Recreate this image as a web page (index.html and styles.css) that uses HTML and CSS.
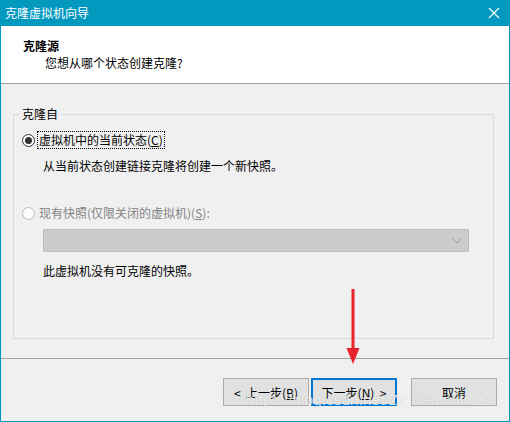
FILE: index.html
```html
<!DOCTYPE html>
<html lang="zh-CN">
<head>
    <meta charset="UTF-8">
    <title>克隆虚拟机向导</title>
    <link rel="stylesheet" href="styles.css">
</head>
<body>
    <div class="window">
        <div class="titlebar">
            <span class="title">克隆虚拟机向导</span>
            <svg class="close" width="12" height="12" viewBox="0 0 12 12">
                <path d="M1 1 L11 11 M11 1 L1 11" stroke="#fff" stroke-width="1.2" fill="none"/>
            </svg>
        </div>

        <div class="header">
            <div class="header-title">克隆源</div>
            <div class="header-sub">您想从哪个状态创建克隆?</div>
        </div>

        <div class="content">
            <fieldset class="group">
                <legend>克隆自</legend>

                <div class="option">
                    <span class="radio checked"></span>
                    <span class="label focused">虚拟机中的当前状态(<u>C</u>)</span>
                </div>
                <div class="desc first">从当前状态创建链接克隆将创建一个新快照。</div>

                <div class="option disabled">
                    <span class="radio"></span>
                    <span class="label">现有快照(仅限关闭的虚拟机)(<u>S</u>):</span>
                </div>
                <div class="combo">
                    <svg width="10" height="6" viewBox="0 0 10 6">
                        <path d="M0.5 0.5 L5 5 L9.5 0.5" stroke="#9a9a9a" stroke-width="1" fill="none"/>
                    </svg>
                </div>
                <div class="desc last">此虚拟机没有可克隆的快照。</div>
            </fieldset>
        </div>

        <div class="footer">
            <button class="btn">&lt;&nbsp; 上一步(<u>B</u>)</button>
            <button class="btn primary">下一步(<u>N</u>)&nbsp; &gt;</button>
            <button class="btn cancel">取消</button>
        </div>

        <!-- annotation drawn on top of the screenshot -->
        <svg class="arrow" width="16" height="80" viewBox="0 0 16 80">
            <line x1="8" y1="1" x2="8" y2="64" stroke="#e8232b" stroke-width="3"/>
            <path d="M1.5 60 L14.5 60 L8 76 Z" fill="#e8232b"/>
        </svg>
        <div class="watermark">https://blog.csdn.net/Zz_xiaonuli_zZ</div>
    </div>
</body>
</html>
```

FILE: styles.css
```css
body {
    margin: 0;
    font-family: "Noto Sans CJK SC", "Noto Sans", sans-serif;
    font-size: 12px;
    color: #000;
    background: #fff;
}
.window {
    position: relative;
    width: 510px;
    height: 422px;
    box-sizing: border-box;
    border: 1px solid #0399bf;
    border-top: none;
    background: #f0f0f0;
    overflow: hidden;
}
.titlebar {
    display: flex;
    align-items: center;
    justify-content: space-between;
    height: 26px;
    margin: 0 -1px;
    padding: 0 10px 0 5px;
    background: #0399bf;
    color: #fff;
    line-height: 16px;
}
.close {
    display: block;
}
.header {
    height: 58px;
    box-sizing: border-box;
    padding-top: 11px;
    background: #fff;
    border-bottom: 1px solid #a0a0a0;
    line-height: 17px;
}
.header-title {
    padding-left: 22px;
    font-weight: bold;
}
.header-sub {
    padding-left: 44px;
}
.content {
    height: 275px;
    box-sizing: border-box;
    padding-top: 22px;
    border-bottom: 1px solid #a0a0a0;
}
.group {
    margin: 0 15px 0 12px;
    padding: 0 0 58px 0;
    border: 1px solid #d9d9d9;
}
.group legend {
    margin-left: 5px;
    padding: 0 3px;
    line-height: 16px;
}
.option {
    display: flex;
    align-items: center;
    height: 18px;
    margin-top: 9px;
    padding-left: 8px;
    line-height: 16px;
}
.option.disabled {
    margin-top: 29px;
    color: #838383;
}
.radio {
    width: 13px;
    height: 13px;
    box-sizing: border-box;
    border: 1px solid #333;
    border-radius: 50%;
    background: #fff;
    position: relative;
    margin-right: 2px;
}
.radio.checked::after {
    content: "";
    position: absolute;
    left: 2px;
    top: 2px;
    width: 7px;
    height: 7px;
    border-radius: 50%;
    background: #333;
}
.option.disabled .radio {
    border-color: #bcbcbc;
    background: #fcfcfc;
}
.label {
    padding: 0 1px;
    border: 1px solid transparent;
}
.label.focused {
    border: 1px dotted #000;
}
.desc {
    padding-left: 29px;
    line-height: 18px;
}
.desc.first {
    margin-top: 8px;
}
.desc.last {
    margin-top: 10px;
}
.combo {
    display: flex;
    align-items: center;
    justify-content: flex-end;
    width: 426px;
    height: 23px;
    box-sizing: border-box;
    margin: 7px 0 0 29px;
    padding-right: 6px;
    background: #cccccc;
    border: 1px solid #bfbfbf;
}
.footer {
    display: flex;
    justify-content: flex-end;
    padding: 19px 12px 0 0;
}
.btn {
    width: 86px;
    height: 28px;
    box-sizing: border-box;
    padding: 0;
    font-family: inherit;
    font-size: 12px;
    color: #000;
    background: #e1e1e1;
    border: 1px solid #adadad;
}
.btn.primary {
    margin-left: 2px;
    border: 2px solid #0078d7;
}
.btn.cancel {
    margin-left: 14px;
}
.arrow {
    position: absolute;
    left: 344px;
    top: 288px;
}
.watermark {
    position: absolute;
    left: 245px;
    top: 391px;
    font-family: "Liberation Sans", Arial, sans-serif;
    font-size: 15px;
    letter-spacing: 0.2px;
    color: rgba(255, 255, 255, 0.8);
    text-shadow: 0 0 1px rgba(0, 0, 0, 0.25);
    white-space: nowrap;
}
```
